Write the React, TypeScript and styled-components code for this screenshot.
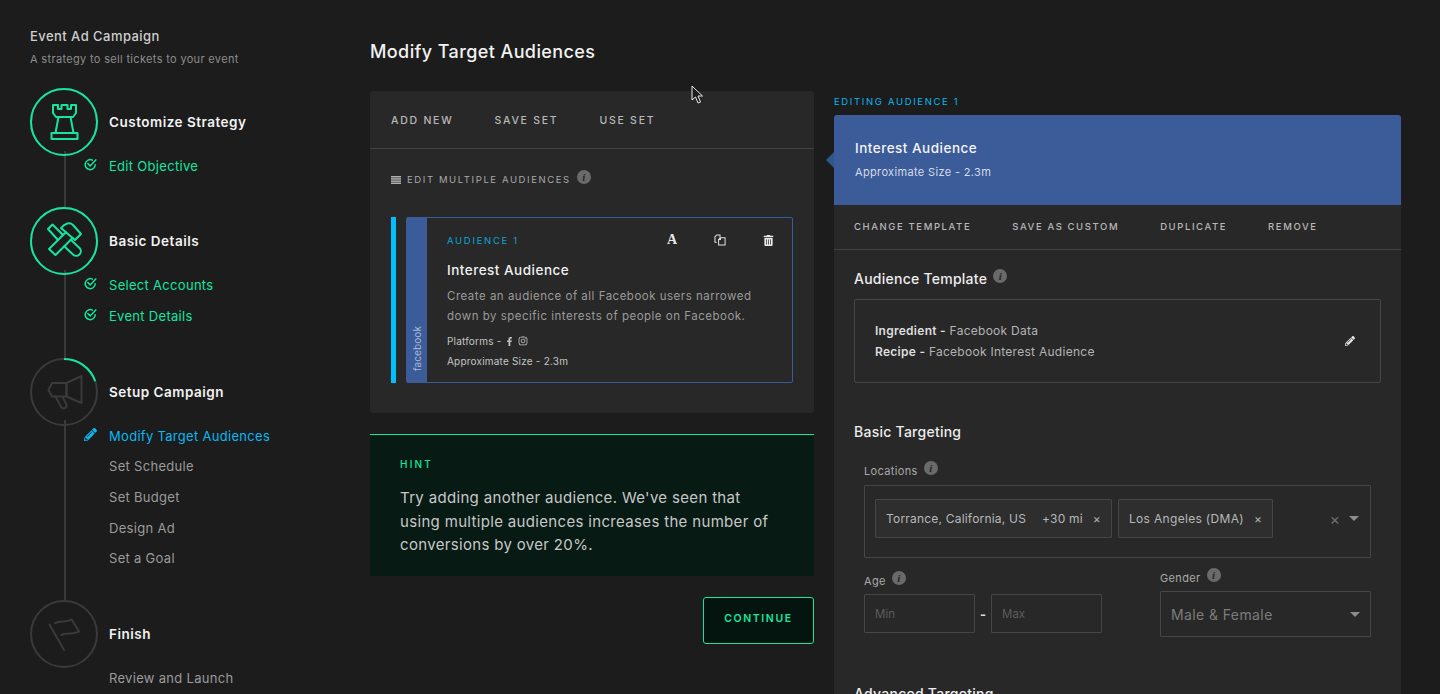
import styled, { createGlobalStyle } from "styled-components";
import { FaFacebookF, FaInstagram, FaPencilAlt, FaTrashAlt } from "react-icons/fa";
import type { ReactNode } from "react";

const GREEN = "#14e5a0";
const BLUE = "#08b8f0";
const FB = "#3b5b99";
const DIM = "#3a3a3a";

const GlobalStyle = createGlobalStyle`
  html, body {
    margin: 0;
    height: 100%;
    background: #1c1c1c;
    overflow: hidden;
  }
  * {
    box-sizing: border-box;
  }
  body {
    font-family: Inter, "Liberation Sans", sans-serif;
    color: #e6e6e6;
  }
`;

const Page = styled.div`
  display: flex;
  height: 694px;
  overflow: hidden;
  position: relative;
`;

const Sidebar = styled.aside`
  width: 370px;
  flex-shrink: 0;
  padding: 29px 0 0 30px;
`;

const CampaignTitle = styled.div`
  font-size: 13px;
  line-height: 15px;
  font-weight: 500;
  letter-spacing: 0.45px;
  color: #cfcfcf;
`;

const CampaignSub = styled.div`
  margin-top: 8px;
  margin-bottom: 22px;
  font-size: 11px;
  line-height: 14px;
  letter-spacing: 0.33px;
  color: #8c8c8c;
`;

const StepHead = styled.div`
  display: flex;
  align-items: center;
  gap: 11px;
  height: 68px;
`;

const StepTitle = styled.div`
  font-size: 13.5px;
  font-weight: 600;
  letter-spacing: 0.5px;
  color: #f2f2f2;
`;

const StepBody = styled.div<{ $last?: boolean }>`
  margin-left: 34px;
  border-left: 2px solid ${({ $last }) => ($last ? "transparent" : DIM)};
  padding: 0 0 26.3px 18px;
`;

const ItemList = styled.div`
  margin-top: -5.5px;
`;

const Item = styled.div<{ $tone: "done" | "active" | "todo" }>`
  display: flex;
  align-items: center;
  height: 30.7px;
  font-size: 13px;
  letter-spacing: 0.3px;
  color: ${({ $tone }) =>
    $tone === "done" ? GREEN : $tone === "active" ? BLUE : "#9b9b9b"};
`;

const ItemIcon = styled.span`
  width: 25px;
  flex-shrink: 0;
  display: flex;
  align-items: center;
  margin-top: -3px;
  font-size: 13px;
`;

const Main = styled.main`
  display: flex;
  flex-direction: column;
  flex: 1;
  min-height: 0;
  padding-right: 39px;
`;

const PageTitle = styled.h1`
  margin: 0;
  height: 91px;
  flex-shrink: 0;
  padding-top: 41px;
  font-size: 18px;
  line-height: 22px;
  font-weight: 500;
  letter-spacing: 0.4px;
  color: #f2f2f2;
`;

const Columns = styled.div`
  display: flex;
  gap: 20px;
`;

const LeftColumn = styled.div`
  width: 444px;
  flex-shrink: 0;
`;

const RightColumn = styled.div`
  flex: 1;
  margin-top: 5px;
`;

const Panel = styled.section`
  background: #282828;
  border-radius: 4px;
  height: 322px;
`;

const ActionBar = styled.div<{ $small?: boolean }>`
  display: flex;
  align-items: center;
  border-bottom: 1px solid #424242;
  height: ${({ $small }) => ($small ? "45px" : "58px")};
  padding: ${({ $small }) => ($small ? "0 20px 2px" : "2px 21px 0")};
  gap: 41px;
`;

const ActionLink = styled.span<{ $small?: boolean }>`
  font-size: ${({ $small }) => ($small ? "9.5px" : "10.5px")};
  font-weight: 500;
  letter-spacing: ${({ $small }) => ($small ? "1.6px" : "1.75px")};
  color: #b8b8b8;
`;

const MultiRow = styled.div`
  display: flex;
  align-items: center;
  height: 59px;
  padding: 2px 21px 0;
  font-size: 9.5px;
  letter-spacing: 1.6px;
  color: #a8a8a8;
`;

const ListGlyph = styled.svg`
  margin-right: 6px;
`;

const Info = styled.span`
  display: inline-flex;
  align-items: center;
  justify-content: center;
  width: 14px;
  height: 14px;
  margin-left: 6px;
  margin-top: -6px;
  border-radius: 50%;
  background: #6a6a6a;
  color: #282828;
  font-family: "Liberation Serif", serif;
  font-style: italic;
  font-weight: 700;
  font-size: 11px;
  letter-spacing: 0;
  flex-shrink: 0;
`;

const CardRow = styled.div`
  display: flex;
  gap: 10px;
  margin: 9px 21px 0;
  height: 166px;
`;

const CardMarker = styled.div`
  width: 5px;
  background: #00bfff;
`;

const Card = styled.article`
  flex: 1;
  display: flex;
  border: 1px solid ${FB};
  border-radius: 2px;
`;

const CardStrip = styled.div`
  width: 20px;
  background: ${FB};
  display: flex;
  justify-content: center;
  align-items: flex-end;
  padding-bottom: 11px;
`;

const StripLabel = styled.span`
  writing-mode: vertical-rl;
  transform: rotate(180deg);
  font-size: 10px;
  letter-spacing: 0.1px;
  color: #a9b9d8;
`;

const CardContent = styled.div`
  flex: 1;
  padding: 15px 18px 0 20px;
`;

const CardTop = styled.div`
  display: flex;
  align-items: center;
  justify-content: space-between;
  height: 14px;
  margin-bottom: 15px;
`;

const AudienceTag = styled.span`
  font-size: 9.5px;
  letter-spacing: 1.7px;
  color: #0aa5d8;
`;

const CardTools = styled.div`
  display: flex;
  align-items: center;
  gap: 36px;
  color: #e8e8e8;
`;

const ToolSlot = styled.span`
  width: 12px;
  display: flex;
  justify-content: center;
  font-size: 11px;
`;

const SerifA = styled.span`
  font-family: "Liberation Serif", serif;
  font-weight: 700;
  font-size: 14px;
  line-height: 14px;
`;

const CardName = styled.div`
  font-size: 13.5px;
  line-height: 16px;
  font-weight: 500;
  letter-spacing: 0.5px;
  color: #f0f0f0;
`;

const CardText = styled.p`
  margin: 8px 0 0;
  font-size: 11.5px;
  line-height: 20px;
  letter-spacing: 0.5px;
  color: #9a9a9a;
  white-space: nowrap;
`;

const CardMeta = styled.div`
  display: flex;
  align-items: center;
  gap: 4px;
  height: 20px;
  font-size: 10px;
  letter-spacing: 0.2px;
  color: #c4c4c4;
`;

const MetaFirst = styled(CardMeta)`
  margin-top: 5px;
`;

const Hint = styled.section`
  margin-top: 21px;
  height: 142px;
  background: #071a14;
  border-top: 1px solid ${GREEN};
  padding: 22px 30px 0;
  border-radius: 0 0 2px 2px;
`;

const HintLabel = styled.div`
  font-size: 10px;
  line-height: 14px;
  font-weight: 500;
  letter-spacing: 2.2px;
  color: ${GREEN};
`;

const HintText = styled.p`
  margin: 15px 0 0;
  font-size: 15px;
  line-height: 23.5px;
  letter-spacing: 0.33px;
  color: #c8c8c8;
`;

const ButtonRow = styled.div`
  display: flex;
  justify-content: flex-end;
  margin-top: 21px;
`;

const ContinueButton = styled.button`
  width: 111px;
  height: 47px;
  padding: 0 0 4px;
  background: #04150f;
  border: 1px solid ${GREEN};
  border-radius: 3px;
  color: ${GREEN};
  font-family: inherit;
  font-size: 10.5px;
  font-weight: 600;
  letter-spacing: 1.6px;
`;

const EditingLabel = styled.div`
  height: 19px;
  font-size: 9.5px;
  line-height: 12px;
  letter-spacing: 1.65px;
  color: ${BLUE};
`;

const EditorPanel = styled.section`
  background: #282828;
  height: 600px;
  border-radius: 3px 3px 0 0;
`;

const EditorHeader = styled.header`
  position: relative;
  height: 90px;
  background: ${FB};
  padding: 25px 21px 0;
  border-radius: 3px 3px 0 0;

  &::before {
    content: "";
    position: absolute;
    left: -8px;
    top: 37px;
    border-style: solid;
    border-width: 8px 8px 8px 0;
    border-color: transparent #2c5a86 transparent transparent;
  }
`;

const EditorName = styled.div`
  font-size: 13.5px;
  line-height: 17px;
  font-weight: 500;
  letter-spacing: 0.5px;
  color: #f4f4f4;
`;

const EditorSize = styled.div`
  margin-top: 8px;
  font-size: 11px;
  line-height: 14px;
  letter-spacing: 0.35px;
  color: #d5dbe8;
`;

const EditorBody = styled.div`
  padding: 20px 20px 0;
`;

const SectionTitle = styled.div`
  display: flex;
  align-items: center;
  font-size: 14px;
  line-height: 18px;
  font-weight: 500;
  letter-spacing: 0.25px;
  color: #ededed;
`;

const TemplateBox = styled.div`
  display: flex;
  align-items: center;
  justify-content: space-between;
  height: 84px;
  margin-top: 11px;
  padding: 0 25px 0 20px;
  border: 1px solid #464646;
  border-radius: 2px;
  font-size: 12px;
  line-height: 21px;
  letter-spacing: 0.27px;
  color: #b4b4b4;
`;

const Strong = styled.strong`
  font-weight: 600;
  color: #dedede;
`;

const PenSlot = styled.span`
  font-size: 10px;
  color: #e8e8e8;
  display: flex;
`;

const BasicTitle = styled(SectionTitle)`
  margin-top: 40px;
`;

const FieldGroup = styled.div`
  padding: 0 10px;
  margin-top: 22px;
`;

const FieldLabel = styled.div`
  display: flex;
  align-items: center;
  height: 16px;
  font-size: 11px;
  letter-spacing: 0.35px;
  color: #a8a8a8;
`;

const LocationBox = styled.div`
  display: flex;
  align-items: flex-start;
  gap: 6px;
  height: 73px;
  margin-top: 6px;
  padding: 13px 10px;
  border: 1px solid #464646;
  border-radius: 1px;
`;

const Chip = styled.div<{ $wide?: boolean }>`
  display: flex;
  align-items: center;
  height: 39px;
  padding: 0 10px;
  background: #2e2e2e;
  border: 1px solid #464646;
  border-radius: 1px;
  font-size: 12px;
  letter-spacing: ${({ $wide }) => ($wide ? "0.32px" : "0.2px")};
  color: #b8b8b8;
  white-space: nowrap;
`;

const ChipMiles = styled.span`
  margin-left: 16px;
`;

const ChipClose = styled.span`
  margin-left: 10px;
  font-size: 12px;
  color: #b0b0b0;
`;

const BoxControls = styled.div`
  margin-left: auto;
  display: flex;
  align-items: center;
  gap: 9px;
  height: 39px;
  color: #6e6e6e;
  font-size: 16px;
  padding-right: 1px;
`;

const Caret = styled.span`
  width: 0;
  height: 0;
  border-style: solid;
  border-width: 5px 5px 0;
  border-color: #8c8c8c transparent transparent;
`;

const FieldRow = styled.div`
  display: flex;
  justify-content: space-between;
  margin-top: 12px;
`;

const AgeField = styled.div`
  padding-top: 3px;
`;

const AgeInputs = styled.div`
  display: flex;
  align-items: center;
  margin-top: 5px;
`;

const AgeInput = styled.div`
  width: 111px;
  height: 39px;
  display: flex;
  align-items: center;
  padding: 0 10px;
  border: 1px solid #464646;
  border-radius: 1px;
  font-size: 11.5px;
  color: #5c5c5c;
`;

const AgeDash = styled.span`
  width: 16px;
  text-align: center;
  font-size: 13px;
  font-weight: 700;
  color: #dcdcdc;
`;

const GenderField = styled.div`
  width: 211px;
`;

const GenderSelect = styled.div`
  display: flex;
  align-items: center;
  justify-content: space-between;
  height: 46px;
  margin-top: 5px;
  padding: 0 10px;
  border: 1px solid #464646;
  border-radius: 1px;
  font-size: 14px;
  letter-spacing: 0.4px;
  color: #7c7c7c;
`;

const AdvancedTitle = styled(SectionTitle)`
  margin-top: 48px;
`;

const Cursor = styled.svg`
  position: absolute;
  left: 691px;
  top: 85px;
`;

const Check = () => (
  <svg width="13" height="13" viewBox="0 0 13 13" fill="none" stroke={GREEN} strokeWidth="1.5" strokeLinecap="round">
    <path d="M11.2 6.8A5 5 0 1 1 8.3 2.1" />
    <path d="M3.9 5.6l2.3 2.3 5.6-6" />
  </svg>
);

const Ring = ({ progress, children }: { progress: number; children: ReactNode }) => (
  <svg width="68" height="68" viewBox="0 0 68 68" fill="none" style={{ flexShrink: 0 }}>
    <circle cx="34" cy="34" r="33" stroke={DIM} strokeWidth="2" />
    {progress > 0 && (
      <circle
        cx="34"
        cy="34"
        r="33"
        stroke={GREEN}
        strokeWidth="2"
        strokeDasharray={`${207.3 * progress} 207.3`}
        transform="rotate(-90 34 34)"
      />
    )}
    <g stroke={progress === 1 ? GREEN : DIM} strokeWidth="2" strokeLinejoin="round" strokeLinecap="round">
      {children}
    </g>
  </svg>
);

const Rook = () => (
  <>
    <path d="M23 17h5v4h3.500v-4h6v4h3.500v-4h5v8l-3 4H26l-3-4z" />
    <path d="M28.500 29l-3 16M40.500 29l3 16" />
    <path d="M21.500 45h26v6h-26z" />
  </>
);

const Tools = () => (
  <>
    <path d="M19 42l16.900-16.800M25.500 48l17.100-17M19 42l6.500 6" />
    <path d="M31 21c4-5 9-6 12-3l8 9-6 6z" />
    <path d="M18 22l4.500-4.500L33 28M18 22l10 11" />
    <path d="M34.300 39.200L43 47.500a4.500 4.500 0 0 0 6.500-6.500l-8.700-8.300" />
  </>
);

const Megaphone = () => (
  <>
    <path d="M36.500 25l15-7v27l-15-6.500z" />
    <path d="M22 25h14.500v13.500H22l-3.500-6.500z" />
    <path d="M25.500 38.500l6 11a3 3 0 0 0 5-3l-3.500-6.500" />
  </>
);

const Flag = () => (
  <>
    <path d="M19.500 24.500L34 50" />
    <path d="M25 23c6-3 11 0 16.500-3.500L49 31.500c-6 4-11 0-17.500 3.500" />
  </>
);

const CopyIcon = () => (
  <svg width="14" height="14" viewBox="0 0 13 13" fill="none" stroke="#e0e0e0" strokeWidth="1.1">
    <path d="M3 9H1V3l2-2h3.500v3" />
    <path d="M5 12V6l2-2h5v8zM7 4v2H5" />
  </svg>
);

const steps = [
  {
    title: "Customize Strategy",
    progress: 1,
    icon: <Rook />,
    items: [{ label: "Edit Objective", tone: "done" as const }],
  },
  {
    title: "Basic Details",
    progress: 1,
    icon: <Tools />,
    items: [
      { label: "Select Accounts", tone: "done" as const },
      { label: "Event Details", tone: "done" as const },
    ],
  },
  {
    title: "Setup Campaign",
    progress: 0.197,
    icon: <Megaphone />,
    items: [
      { label: "Modify Target Audiences", tone: "active" as const },
      { label: "Set Schedule", tone: "todo" as const },
      { label: "Set Budget", tone: "todo" as const },
      { label: "Design Ad", tone: "todo" as const },
      { label: "Set a Goal", tone: "todo" as const },
    ],
  },
  {
    title: "Finish",
    progress: 0,
    icon: <Flag />,
    items: [{ label: "Review and Launch", tone: "todo" as const }],
  },
];

export default function App() {
  return (
    <Page>
      <GlobalStyle />
      <Sidebar>
        <CampaignTitle>Event Ad Campaign</CampaignTitle>
        <CampaignSub>A strategy to sell tickets to your event</CampaignSub>
        {steps.map((step, index) => (
          <div key={step.title}>
            <StepHead>
              <Ring progress={step.progress}>{step.icon}</Ring>
              <StepTitle>{step.title}</StepTitle>
            </StepHead>
            <StepBody $last={index === steps.length - 1}>
              <ItemList>
                {step.items.map((item) => (
                  <Item key={item.label} $tone={item.tone}>
                    <ItemIcon>
                      {item.tone === "done" && <Check />}
                      {item.tone === "active" && <FaPencilAlt />}
                    </ItemIcon>
                    {item.label}
                  </Item>
                ))}
              </ItemList>
            </StepBody>
          </div>
        ))}
      </Sidebar>

      <Main>
        <PageTitle>Modify Target Audiences</PageTitle>
        <Columns>
          <LeftColumn>
            <Panel>
              <ActionBar>
                <ActionLink>ADD NEW</ActionLink>
                <ActionLink>SAVE SET</ActionLink>
                <ActionLink>USE SET</ActionLink>
              </ActionBar>
              <MultiRow>
                <ListGlyph width="10" height="8" viewBox="0 0 10 8" fill="#b0b0b0">
                  <rect width="10" height="1.500" />
                  <rect y="2.200" width="10" height="1.500" />
                  <rect y="4.400" width="10" height="1.500" />
                  <rect y="6.500" width="10" height="1.500" />
                </ListGlyph>
                EDIT MULTIPLE AUDIENCES
                <Info>i</Info>
              </MultiRow>
              <CardRow>
                <CardMarker />
                <Card>
                  <CardStrip>
                    <StripLabel>facebook</StripLabel>
                  </CardStrip>
                  <CardContent>
                    <CardTop>
                      <AudienceTag>AUDIENCE 1</AudienceTag>
                      <CardTools>
                        <ToolSlot>
                          <SerifA>A</SerifA>
                        </ToolSlot>
                        <ToolSlot>
                          <CopyIcon />
                        </ToolSlot>
                        <ToolSlot>
                          <FaTrashAlt />
                        </ToolSlot>
                      </CardTools>
                    </CardTop>
                    <CardName>Interest Audience</CardName>
                    <CardText>
                      Create an audience of all Facebook users narrowed
                      <br />
                      down by specific interests of people on Facebook.
                    </CardText>
                    <MetaFirst>
                      Platforms -
                      <FaFacebookF size={9} />
                      <FaInstagram size={10} />
                    </MetaFirst>
                    <CardMeta>Approximate Size - 2.3m</CardMeta>
                  </CardContent>
                </Card>
              </CardRow>
            </Panel>
            <Hint>
              <HintLabel>HINT</HintLabel>
              <HintText>
                Try adding another audience. We've seen that
                <br />
                using multiple audiences increases the number of
                <br />
                conversions by over 20%.
              </HintText>
            </Hint>
            <ButtonRow>
              <ContinueButton>CONTINUE</ContinueButton>
            </ButtonRow>
          </LeftColumn>

          <RightColumn>
            <EditingLabel>EDITING AUDIENCE 1</EditingLabel>
            <EditorPanel>
              <EditorHeader>
                <EditorName>Interest Audience</EditorName>
                <EditorSize>Approximate Size - 2.3m</EditorSize>
              </EditorHeader>
              <ActionBar $small>
                <ActionLink $small>CHANGE TEMPLATE</ActionLink>
                <ActionLink $small>SAVE AS CUSTOM</ActionLink>
                <ActionLink $small>DUPLICATE</ActionLink>
                <ActionLink $small>REMOVE</ActionLink>
              </ActionBar>
              <EditorBody>
                <SectionTitle>
                  Audience Template
                  <Info>i</Info>
                </SectionTitle>
                <TemplateBox>
                  <div>
                    <div>
                      <Strong>Ingredient -</Strong> Facebook Data
                    </div>
                    <div>
                      <Strong>Recipe -</Strong> Facebook Interest Audience
                    </div>
                  </div>
                  <PenSlot>
                    <FaPencilAlt />
                  </PenSlot>
                </TemplateBox>
                <BasicTitle>Basic Targeting</BasicTitle>
                <FieldGroup>
                  <FieldLabel>
                    Locations
                    <Info>i</Info>
                  </FieldLabel>
                  <LocationBox>
                    <Chip>
                      Torrance, California, US
                      <ChipMiles>+30 mi</ChipMiles>
                      <ChipClose>×</ChipClose>
                    </Chip>
                    <Chip $wide>
                      Los Angeles (DMA)
                      <ChipClose>×</ChipClose>
                    </Chip>
                    <BoxControls>
                      ×
                      <Caret />
                    </BoxControls>
                  </LocationBox>
                  <FieldRow>
                    <AgeField>
                      <FieldLabel>
                        Age
                        <Info>i</Info>
                      </FieldLabel>
                      <AgeInputs>
                        <AgeInput>Min</AgeInput>
                        <AgeDash>-</AgeDash>
                        <AgeInput>Max</AgeInput>
                      </AgeInputs>
                    </AgeField>
                    <GenderField>
                      <FieldLabel>
                        Gender
                        <Info>i</Info>
                      </FieldLabel>
                      <GenderSelect>
                        Male &amp; Female
                        <Caret />
                      </GenderSelect>
                    </GenderField>
                  </FieldRow>
                </FieldGroup>
                <AdvancedTitle>Advanced Targeting</AdvancedTitle>
              </EditorBody>
            </EditorPanel>
          </RightColumn>
        </Columns>
      </Main>

      <Cursor width="12" height="19" viewBox="0 0 12 19">
        <path d="M1 1v14l3.500-3 2.500 6 2.500-1-2.500-6h4.500z" fill="#1c1c1c" stroke="#e8e8e8" strokeWidth="1" />
      </Cursor>
    </Page>
  );
}
